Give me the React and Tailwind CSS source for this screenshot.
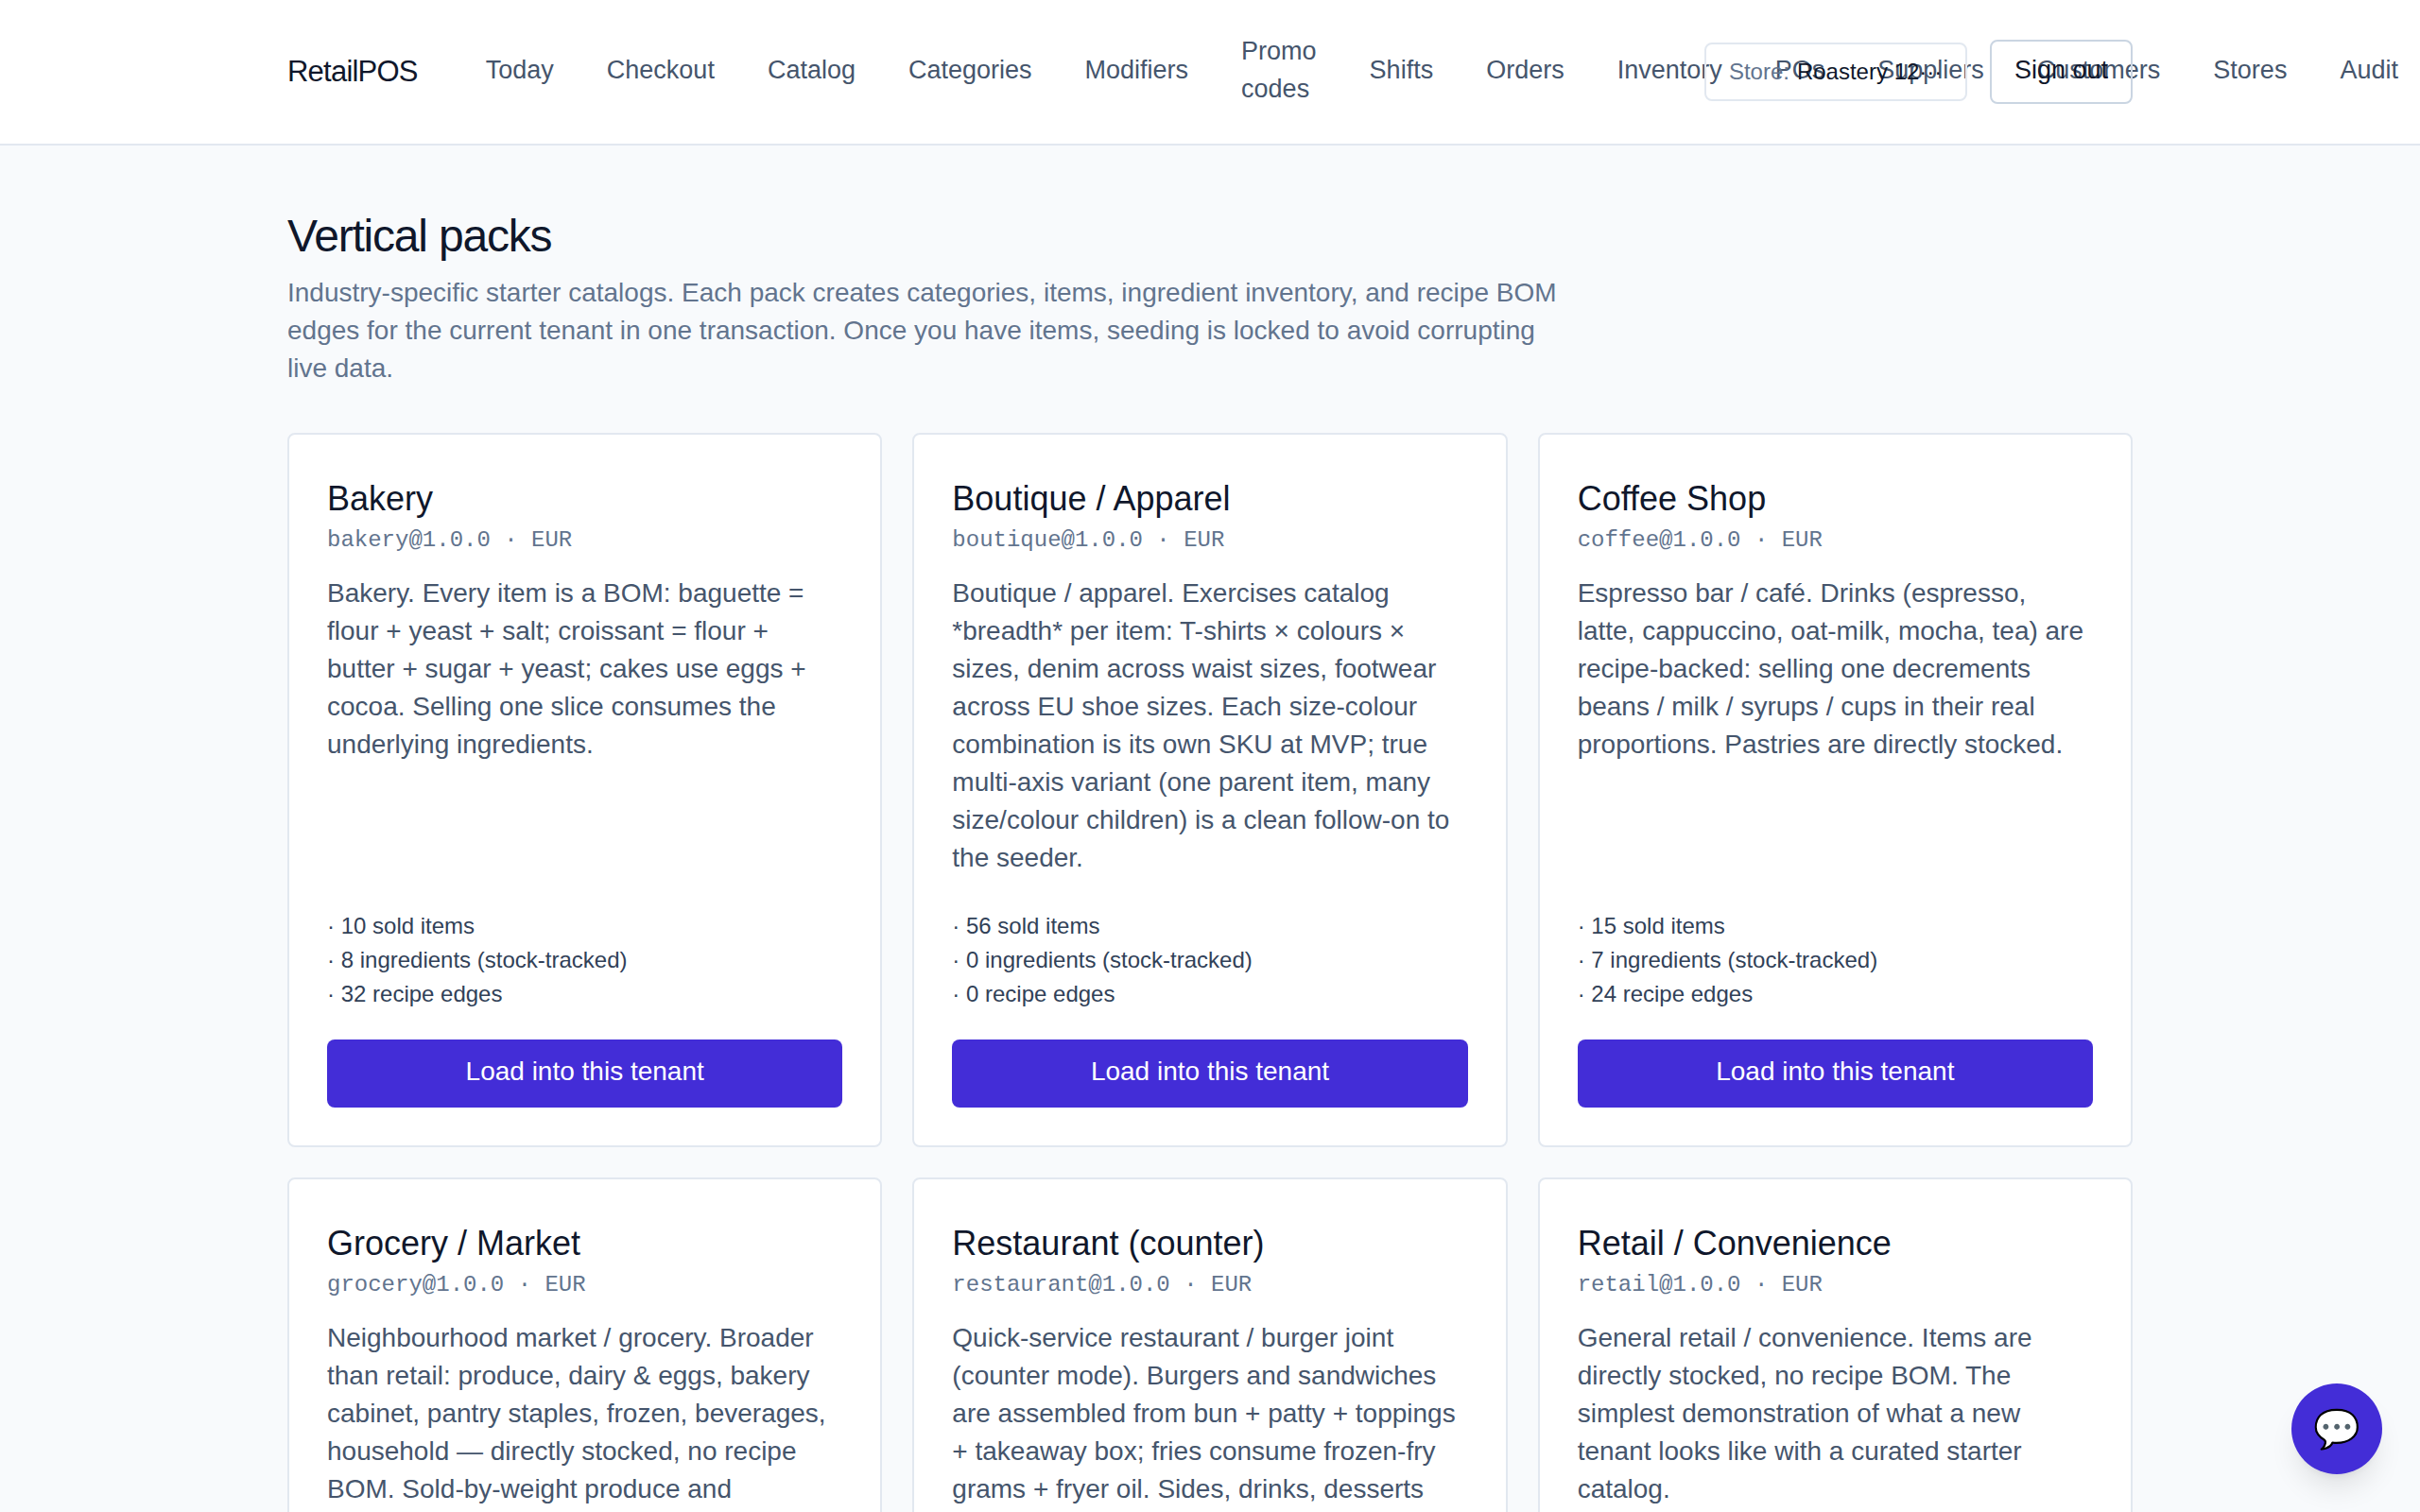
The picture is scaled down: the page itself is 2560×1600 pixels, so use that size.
import React from 'react';

const NAV = [
  'Today', 'Checkout', 'Catalog', 'Categories', 'Modifiers', 'Promo codes', 'Shifts',
  'Orders', 'Inventory', 'POs', 'Suppliers', 'Customers', 'Stores', 'Audit',
];

const PACKS = [
  {
    name: 'Bakery', slug: 'bakery', sold: 10, ingredients: 8, edges: 32,
    text: 'Bakery. Every item is a BOM: baguette = flour + yeast + salt; croissant = flour + butter + sugar + yeast; cakes use eggs + cocoa. Selling one slice consumes the underlying ingredients.',
  },
  {
    name: 'Boutique / Apparel', slug: 'boutique', sold: 56, ingredients: 0, edges: 0,
    text: 'Boutique / apparel. Exercises catalog *breadth* per item: T-shirts × colours × sizes, denim across waist sizes, footwear across EU shoe sizes. Each size-colour combination is its own SKU at MVP; true multi-axis variant (one parent item, many size/colour children) is a clean follow-on to the seeder.',
  },
  {
    name: 'Coffee Shop', slug: 'coffee', sold: 15, ingredients: 7, edges: 24,
    text: 'Espresso bar / café. Drinks (espresso, latte,\u00a0cappuccino, oat-milk, mocha, tea) are recipe-backed: selling one decrements beans / milk / syrups / cups in their real proportions. Pastries are directly stocked.',
  },
  {
    name: 'Grocery / Market', slug: 'grocery',
    text: 'Neighbourhood market / grocery. Broader than retail: produce, dairy & eggs, bakery cabinet, pantry staples, frozen, beverages, household — directly stocked, no recipe BOM. Sold-by-weight produce and',
  },
  {
    name: 'Restaurant (counter)', slug: 'restaurant',
    text: 'Quick-service restaurant / burger joint (counter mode). Burgers and sandwiches are assembled from bun + patty + toppings + takeaway box; fries consume frozen-fry grams + fryer oil. Sides, drinks, desserts',
  },
  {
    name: 'Retail / Convenience', slug: 'retail',
    text: 'General retail / convenience. Items are directly stocked, no recipe BOM. The simplest demonstration of what a new tenant looks like with a curated starter catalog.',
  },
];

function Header() {
  return (
    <header className="border-b-2 border-slate-200 bg-white">
      <div className="mx-auto flex max-w-[2048px] items-center justify-between px-12 py-6">
        <div className="flex min-w-0 items-center gap-12">
          <a href="#home" className="text-[31px] leading-[48px] tracking-tight text-slate-900">RetailPOS</a>
          <nav className="flex min-w-0 items-center gap-2">
            {NAV.map((item) => (
              <a key={item} href="#nav" className="px-6 pt-2.5 pb-3.5 text-[27px] leading-[40px] text-slate-600">
                {item}
              </a>
            ))}
          </nav>
        </div>
        <div className="flex shrink-0 items-center gap-6">
          <label className="flex items-center gap-2 rounded-lg border-2 border-slate-200 px-6 py-[13px] text-[24px] leading-[32px] text-slate-500">
            Store:
            <select className="appearance-none bg-transparent text-slate-900">
              <option>Roastery 12···</option>
            </select>
          </label>
          <button type="button" className="rounded-lg border-2 border-slate-300 px-6 pt-2.5 pb-3.5 text-[27px] leading-[40px] whitespace-nowrap text-slate-900">
            Sign out
          </button>
        </div>
      </div>
    </header>
  );
}

function PackCard({ pack }) {
  return (
    <article className="flex flex-col rounded-lg border-2 border-slate-200 bg-white p-10">
      <h2 className="text-[36px] leading-[56px] text-slate-900">{pack.name}</h2>
      <p className="font-['Liberation_Mono',monospace] text-[24px] leading-[32px] text-slate-500">
        {pack.slug}@1.0.0 · EUR
      </p>
      <p className="mt-5 grow text-[28px] leading-[40px] text-slate-600">{pack.text}</p>
      {pack.sold !== undefined && (
        <>
          <ul className="mt-9 flex flex-col gap-1 text-[24px] leading-[32px] text-slate-700">
            <li>· {pack.sold} sold items</li>
            <li>· {pack.ingredients} ingredients (stock-tracked)</li>
            <li>· {pack.edges} recipe edges</li>
          </ul>
          <button type="button" className="mt-8 rounded-lg bg-[#432dd7] px-6 pt-3.5 pb-4.5 text-[28px] leading-[40px] text-white">
            Load into this tenant
          </button>
        </>
      )}
    </article>
  );
}

export default function App() {
  return (
    <div className="h-screen overflow-hidden bg-slate-50 font-['Liberation_Sans',Arial,sans-serif]">
      <Header />
      <main className="mx-auto max-w-[2048px] px-12 py-16">
        <h1 className="text-[48px] leading-[64px] tracking-tight text-slate-900">Vertical packs</h1>
        <p className="mt-2 max-w-[1344px] text-[28px] leading-[40px] text-slate-500">
          Industry-specific starter catalogs. Each pack creates categories, items, ingredient
          inventory, and recipe BOM edges for the current tenant in one transaction. Once you have
          items, seeding is locked to avoid corrupting live data.
        </p>
        <section className="mt-12 grid grid-cols-3 gap-8">
          {PACKS.map((pack) => (
            <PackCard key={pack.slug} pack={pack} />
          ))}
        </section>
      </main>
      <button
        type="button"
        aria-label="Open chat"
        className="fixed right-10 bottom-10 flex size-24 items-center justify-center rounded-full bg-[#432dd7] text-[40px] leading-[56px] text-white shadow-[0_20px_30px_-6px_rgb(0_0_0/0.1),0_8px_12px_-8px_rgb(0_0_0/0.1)]"
      >
        💬
      </button>
    </div>
  );
}
